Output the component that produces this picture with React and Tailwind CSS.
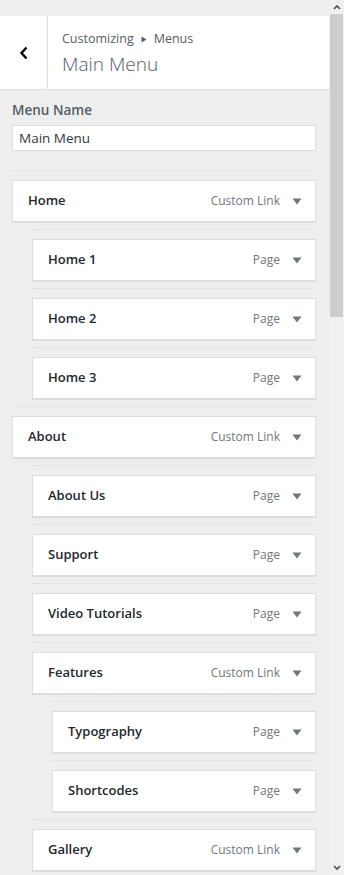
import React from "react";

const items = [
  { t: "Home", k: "Custom Link", d: 0 },
  { t: "Home 1", k: "Page", d: 1 },
  { t: "Home 2", k: "Page", d: 1 },
  { t: "Home 3", k: "Page", d: 1 },
  { t: "About", k: "Custom Link", d: 0 },
  { t: "About Us", k: "Page", d: 1 },
  { t: "Support", k: "Page", d: 1 },
  { t: "Video Tutorials", k: "Page", d: 1 },
  { t: "Features", k: "Custom Link", d: 1 },
  { t: "Typography", k: "Page", d: 2 },
  { t: "Shortcodes", k: "Page", d: 2 },
  { t: "Gallery", k: "Custom Link", d: 1 },
];

const indent = ["ml-0", "ml-[20px]", "ml-[40px]"];

function Item({ t, k, d }) {
  return (
    <div className={indent[d]}>
      <div className="border-t border-dotted border-[#dadada] h-[10px]" />
      <div className="h-[42px] bg-white border border-[#dddddd] shadow-[0_1px_0_#dcdcdc] flex items-center pl-[15px] pr-[13px]">
        <span className="text-[13px] font-semibold text-[#23282d] flex-1">{t}</span>
        <span className="text-[12px] text-[#72777c]">{k}</span>
        <svg width="10" height="7" viewBox="0 0 10 7" className="ml-[12px]">
          <path d="M0.5 0.5 H9.5 L5 6.5 Z" fill="#72777c" />
        </svg>
      </div>
      <div className="h-[7px]" />
    </div>
  );
}

export default function App() {
  return (
    <div
      className="w-[344px] h-[875px] flex bg-[#eeeeee] overflow-hidden"
      style={{ fontFamily: '"Open Sans", "Noto Sans", sans-serif' }}
    >
      <div className="w-[329px] h-full overflow-hidden flex flex-col">
        <div className="h-[16px] shrink-0" />
        <div className="h-[74px] shrink-0 bg-white border-b border-[#dddddd] flex">
          <div className="w-[48px] border-r border-[#dddddd] flex items-center justify-center">
            <svg width="10" height="14" viewBox="0 0 10 14" className="mt-[1px]">
              <path d="M7.5 1.5 L2.5 7 L7.5 12.5" fill="none" stroke="#000" strokeWidth="2.4" />
            </svg>
          </div>
          <div className="pl-[14px] pt-[14px] flex flex-col">
            <div className="text-[12.5px] text-[#555d66] leading-[18px] flex items-center">
              Customizing
              <svg width="6" height="7" viewBox="0 0 6 7" className="mx-[7px]">
                <path d="M0.5 0.5 L5.5 3.5 L0.5 6.5 Z" fill="#555d66" />
              </svg>
              Menus
            </div>
            <div className="text-[19px] text-[#555d66] leading-[26px] mt-[3px] font-light">Main Menu</div>
          </div>
        </div>
        <div className="px-[12px] pt-[11px]">
          <div className="text-[13.5px] font-semibold text-[#555d66] leading-[18px]">Menu Name</div>
          <div className="mt-[6px] h-[26px] bg-white border border-[#dddddd] flex items-center pl-[6px] text-[13.5px] text-[#32373c] w-[304px]">
            Main Menu
          </div>
          <div className="mt-[19px] w-[304px]">
            {items.map((it, i) => (
              <Item key={i} {...it} />
            ))}
          </div>
        </div>
      </div>
      <div className="w-[15px] h-full bg-[#f0f0f0] flex flex-col">
        <div className="h-[14px] flex items-center justify-center">
          <svg width="8" height="6" viewBox="0 0 8 6">
            <path d="M1 5 L4 2 L7 5" fill="none" stroke="#505050" strokeWidth="1.6" />
          </svg>
        </div>
        <div className="h-[303px] mx-[1px] bg-[#cdcdcd]" />
        <div className="flex-1" />
        <div className="h-[15px] flex items-center justify-center">
          <svg width="8" height="6" viewBox="0 0 8 6">
            <path d="M1 1 L4 4 L7 1" fill="none" stroke="#505050" strokeWidth="1.6" />
          </svg>
        </div>
      </div>
    </div>
  );
}
